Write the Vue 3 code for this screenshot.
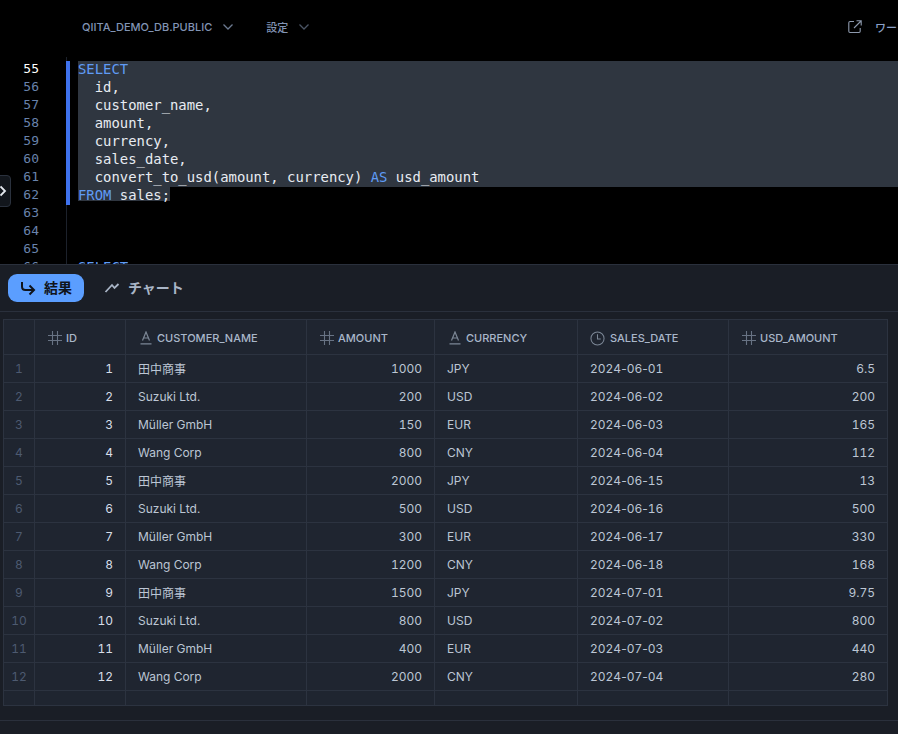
<script setup>
const lineNumbers = [55, 56, 57, 58, 59, 60, 61, 62, 63, 64, 65, 66]
const columns = [
  { name: 'ID', icon: 'hash', width: 91 },
  { name: 'CUSTOMER_NAME', icon: 'text', width: 181 },
  { name: 'AMOUNT', icon: 'hash', width: 128 },
  { name: 'CURRENCY', icon: 'text', width: 143 },
  { name: 'SALES_DATE', icon: 'clock', width: 151 },
  { name: 'USD_AMOUNT', icon: 'hash', width: 159 },
]
const selectedLines = ['  id,', '  customer_name,', '  amount,', '  currency,', '  sales_date,']
const rows = [
  [1, '田中商事', 1000, 'JPY', '2024-06-01', '6.5'],
  [2, 'Suzuki Ltd.', 200, 'USD', '2024-06-02', '200'],
  [3, 'Müller GmbH', 150, 'EUR', '2024-06-03', '165'],
  [4, 'Wang Corp', 800, 'CNY', '2024-06-04', '112'],
  [5, '田中商事', 2000, 'JPY', '2024-06-15', '13'],
  [6, 'Suzuki Ltd.', 500, 'USD', '2024-06-16', '500'],
  [7, 'Müller GmbH', 300, 'EUR', '2024-06-17', '330'],
  [8, 'Wang Corp', 1200, 'CNY', '2024-06-18', '168'],
  [9, '田中商事', 1500, 'JPY', '2024-07-01', '9.75'],
  [10, 'Suzuki Ltd.', 800, 'USD', '2024-07-02', '800'],
  [11, 'Müller GmbH', 400, 'EUR', '2024-07-03', '440'],
  [12, 'Wang Corp', 2000, 'CNY', '2024-07-04', '280'],
]
</script>

<template>
  <div class="page">
    <header class="topbar">
      <span class="ctx">QIITA_DEMO_DB.PUBLIC</span>
      <svg class="chev ctx-chev" viewBox="0 0 12 12"><path d="M1.5 3.5 6 8l4.5-4.5" /></svg>
      <span class="settings">設定</span>
      <svg class="chev set-chev" viewBox="0 0 12 12"><path d="M1.5 3.5 6 8l4.5-4.5" /></svg>
      <span class="spacer"></span>
      <svg class="open" viewBox="0 0 14 14"><path d="M6 1.500H2A1.200 1.200 0 0 0 .8 2.700v8.600A1.200 1.200 0 0 0 2 12.500h9a1.200 1.200 0 0 0 1.200-1.200V8M6 8l7-7M8.500.8h4.700v4.700" /></svg>
      <span class="worksheet">ワー</span>
    </header>

    <section class="editor">
      <div class="gutter">
        <div v-for="n in lineNumbers" :key="n" class="ln" :class="{ current: n === 55 }">{{ n }}</div>
      </div>
      <div class="code-area">
        <div class="marker"></div>
        <div class="code">
          <div class="line sel"><span class="kw">SELECT</span></div>
          <div v-for="l in selectedLines" :key="l" class="line sel">{{ l }}</div>
          <div class="line sel">{{ '  convert_to_usd(amount, currency) ' }}<span class="kw">AS</span>{{ ' usd_amount' }}</div>
          <div class="line"><span class="sel-part"><span class="kw">FROM</span> sales;</span></div>
          <div class="line"></div>
          <div class="line"></div>
          <div class="line"></div>
          <div class="line"><span class="kw">SELECT</span></div>
        </div>
      </div>
      <button class="expand" type="button">
        <svg viewBox="0 0 7 12"><path d="M.5 1.500 5 6 .5 10.500" /></svg>
      </button>
    </section>

    <section class="results">
      <nav class="tabs">
        <button class="tab active" type="button">
          <svg viewBox="0 0 16 16"><path d="M2 2v4.500q0 3.500 3.500 3.500H14M9.500 5.500 14 10l-4.500 4.500" /></svg>
          <span>結果</span>
        </button>
        <button class="tab" type="button">
          <svg viewBox="0 0 16 16"><path d="M1.500 12 8 5l2.500 3 4-4" /></svg>
          <span>チャート</span>
        </button>
      </nav>

      <div class="table-wrap">
        <table>
          <colgroup>
            <col class="col-index" />
            <col v-for="c in columns" :key="c.name" :style="{ width: c.width + 'px' }" />
          </colgroup>
          <thead>
            <tr>
              <th></th>
              <th v-for="c in columns" :key="c.name">
                <div class="th-inner" :class="{ 'has-clock': c.icon === 'clock' }">
                  <svg v-if="c.icon === 'hash'" class="ticon" viewBox="0 0 14 14"><path d="M4.500 0v14M9.500 0v14M0 4.500h14M0 9.500h14" /></svg>
                  <svg v-else-if="c.icon === 'text'" class="ticon text" viewBox="0 0 14 14"><path d="M3.500 9.500 7 1l3.500 8.500M4.700 7h4.600M1.500 12.800h11" /></svg>
                  <svg v-else class="ticon clock" viewBox="0 0 16 16"><circle cx="8" cy="8" r="7" /><path d="M8 3.500V8.500h3.500" /></svg>
                  <span>{{ c.name }}</span>
                </div>
              </th>
            </tr>
          </thead>
          <tbody>
            <tr v-for="(r, i) in rows" :key="i">
              <td class="idx">{{ i + 1 }}</td>
              <td class="num bright">{{ r[0] }}</td>
              <td>{{ r[1] }}</td>
              <td class="num">{{ r[2] }}</td>
              <td>{{ r[3] }}</td>
              <td>
                <template v-for="(part, p) in r[4].split('-')" :key="p"><span v-if="p" class="dash">-</span>{{ part }}</template>
              </td>
              <td class="num">{{ r[5] }}</td>
            </tr>
            <tr class="empty">
              <td></td><td></td><td></td><td></td><td></td><td></td><td></td>
            </tr>
          </tbody>
        </table>
      </div>
      <div class="footer"></div>
    </section>
  </div>
</template>

<style>
html, body { margin: 0; background: #000; }
</style>

<style scoped>
.page {
  width: 898px;
  height: 734px;
  display: flex;
  flex-direction: column;
  overflow: hidden;
  background: #000;
  font-family: Inter, "Noto Sans CJK JP", sans-serif;
}
.topbar {
  flex: none;
  height: 57px;
  box-sizing: border-box;
  padding: 0 0 3px 82px;
  display: flex;
  align-items: center;
  white-space: nowrap;
}
.ctx { font-size: 11px; font-weight: 500; color: #8294b4; }
.ctx-chev { margin-left: 10px; stroke: #6c7a90; }
.settings { margin-left: 32px; font-size: 11px; font-weight: 500; color: #8294b4; }
.set-chev { margin-left: 10px; stroke: #4a5464; }
.chev { width: 12px; height: 12px; fill: none; stroke-width: 1.300; }
.spacer { flex: 1; }
.open { width: 14px; height: 14px; fill: none; stroke: #8d99ad; stroke-width: 1.100; margin-right: 13px; }
.worksheet { width: 23px; flex: none; overflow: hidden; font-size: 11px; font-weight: 500; color: #8aa0c8; }

.editor {
  flex: none;
  height: 207px;
  position: relative;
  display: flex;
  overflow: hidden;
  font-family: "DejaVu Sans Mono", "Liberation Mono", monospace;
  font-size: 13.900px;
  line-height: 16px;
}
.gutter {
  flex: none;
  width: 66px;
  box-sizing: border-box;
  padding: 4px 27px 0 0;
  text-align: right;
  color: #6983ac;
  font-size: 13px;
}
.ln { height: 18px; }
.ln.current { color: #fff; }
.code-area {
  flex: 1;
  position: relative;
  border-left: 1px solid #1c212b;
  padding: 4px 0 0 11px;
}
.marker {
  position: absolute;
  left: -1px;
  top: 4px;
  width: 4px;
  height: 144px;
  background: #3f72ed;
}
.line {
  height: 18px;
  white-space: pre;
  color: #e8ecf2;
}
.line.sel { background: #2f3640; }
.sel-part {
  display: inline-block;
  height: 14px;
  background: #2f3640;
  vertical-align: top;
}
.kw { color: #5f9bf5; }
.expand {
  position: absolute;
  left: -1px;
  top: 118px;
  width: 12px;
  height: 32px;
  padding: 0;
  box-sizing: border-box;
  border: 1px solid #2a313d;
  border-radius: 0 4px 4px 0;
  background: #12161c;
  display: flex;
  align-items: center;
  justify-content: flex-start;
}
.expand svg { width: 7px; height: 12px; flex: none; fill: none; stroke: #e6eaf0; stroke-width: 1.800; }

.results {
  flex: 1;
  min-height: 0;
  display: flex;
  flex-direction: column;
  background: #1a1e26;
  border-top: 1px solid #2a303c;
}
.tabs {
  flex: none;
  height: 47px;
  box-sizing: border-box;
  padding: 9px 8px 0;
  display: flex;
  align-items: flex-start;
  gap: 12px;
  border-bottom: 1px solid #2a303c;
}
.tab {
  height: 28px;
  padding: 0 8px;
  border: 0;
  border-radius: 9px;
  background: transparent;
  display: flex;
  align-items: center;
  gap: 8px;
  font-family: inherit;
  font-size: 14px;
  line-height: 26px;
  font-weight: 700;
  color: #a9b5c6;
}
.tab svg { width: 16px; height: 16px; fill: none; stroke: #a9b5c6; stroke-width: 1.800; }
.tab.active { padding: 0 12px; background: #5b9eff; color: #10141b; }
.tab.active svg { stroke: #10141b; stroke-width: 2; }

.table-wrap {
  flex: none;
  padding: 7px 0 0 3px;
}
table {
  width: 885px;
  table-layout: fixed;
  border-collapse: collapse;
  background: #1f2530;
  border: 1px solid #2c3340;
  font-size: 12px;
  font-variant-numeric: tabular-nums;
  color: #bcc6d4;
}
.col-index { width: 31px; }
th, td {
  padding: 0 12px;
  border: 1px solid #2c3340;
  box-sizing: border-box;
  white-space: nowrap;
}
th {
  height: 35px;
  padding: 2px 13px 0;
  font-size: 11px;
  font-weight: 500;
  text-align: left;
  color: #a9b7ca;
}
.th-inner { display: flex; align-items: center; gap: 4px; }
.th-inner.has-clock { margin-left: -1px; gap: 5px; }
.ticon { flex: none; width: 14px; height: 14px; fill: none; stroke: #687384; stroke-width: 1.100; }
.ticon.text { stroke: #7c8796; stroke-width: 1.200; }
.ticon.clock { width: 15px; height: 15px; stroke: #7c8796; }
td { height: 28px; }
.idx { padding: 0; text-align: center; color: #4d5a70; }
.num { text-align: right; }
.bright { color: #d7dee8; }
.dash { font-variant-numeric: normal; }
.empty td { height: 15px; }
.footer {
  flex: none;
  margin-top: 14px;
  height: 0;
  border-top: 1px solid #2a303c;
}
</style>
